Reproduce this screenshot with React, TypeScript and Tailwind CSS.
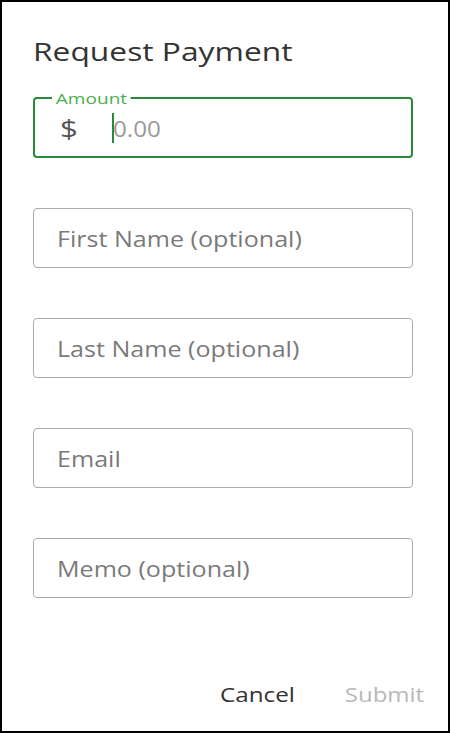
import React from 'react';

const fields = ['First Name (optional)', 'Last Name (optional)', 'Email', 'Memo (optional)'];

export default function App() {
  return (
    <div
      className="w-[450px] h-[733px] box-border border-2 border-black bg-white flex flex-col"
      style={{ fontFamily: '"Open Sans", "Noto Sans", sans-serif' }}
    >
      <h1 className="ml-[31px] mt-[33px] h-[32px] text-[25px] leading-[32px] text-[#333333]">
        <span className="inline-block origin-left scale-x-[1.27]">Request Payment</span>
      </h1>

      <div className="ml-[31px] w-[380px] flex flex-col gap-[50px] mt-[30px]">
        {/* Amount field - focused */}
        <div className="relative h-[61px] border-2 border-[#2a8a3a] rounded-[4px] flex items-center">
          <span className="absolute -top-[9px] left-[17px] px-[3px] bg-white text-[15px] leading-[16px] text-[#4caf50] origin-left scale-x-[1.27]">
            Amount
          </span>
          <span className="ml-[25px] w-[52px] text-[25px] leading-[30px] text-[#555555]">
            <span className="inline-block origin-left scale-x-[1.25]">$</span>
          </span>
          <span className="w-[2px] h-[30px] bg-[#2a8a3a]"></span>
          <span className="-ml-[1px] text-[22px] leading-[30px] text-[#9a9a9a]">
            <span className="inline-block origin-left scale-x-[1.1]">0.00</span>
          </span>
        </div>

        {fields.map((f) => (
          <div
            key={f}
            className="h-[60px] border border-[#a9a9a9] rounded-[4px] flex items-center pl-[23px]"
          >
            <span className="inline-block origin-left scale-x-[1.14] text-[22px] text-[#7a7a7a]">{f}</span>
          </div>
        ))}
      </div>

      <div className="mt-auto mb-[21px] flex justify-end items-center gap-[63px] pr-[24px]">
        <span className="inline-block origin-right scale-x-[1.21] text-[20px] text-[#333333]">Cancel</span>
        <span className="inline-block origin-right scale-x-[1.2] text-[20px] text-[#b8b8b8]">Submit</span>
      </div>
    </div>
  );
}
